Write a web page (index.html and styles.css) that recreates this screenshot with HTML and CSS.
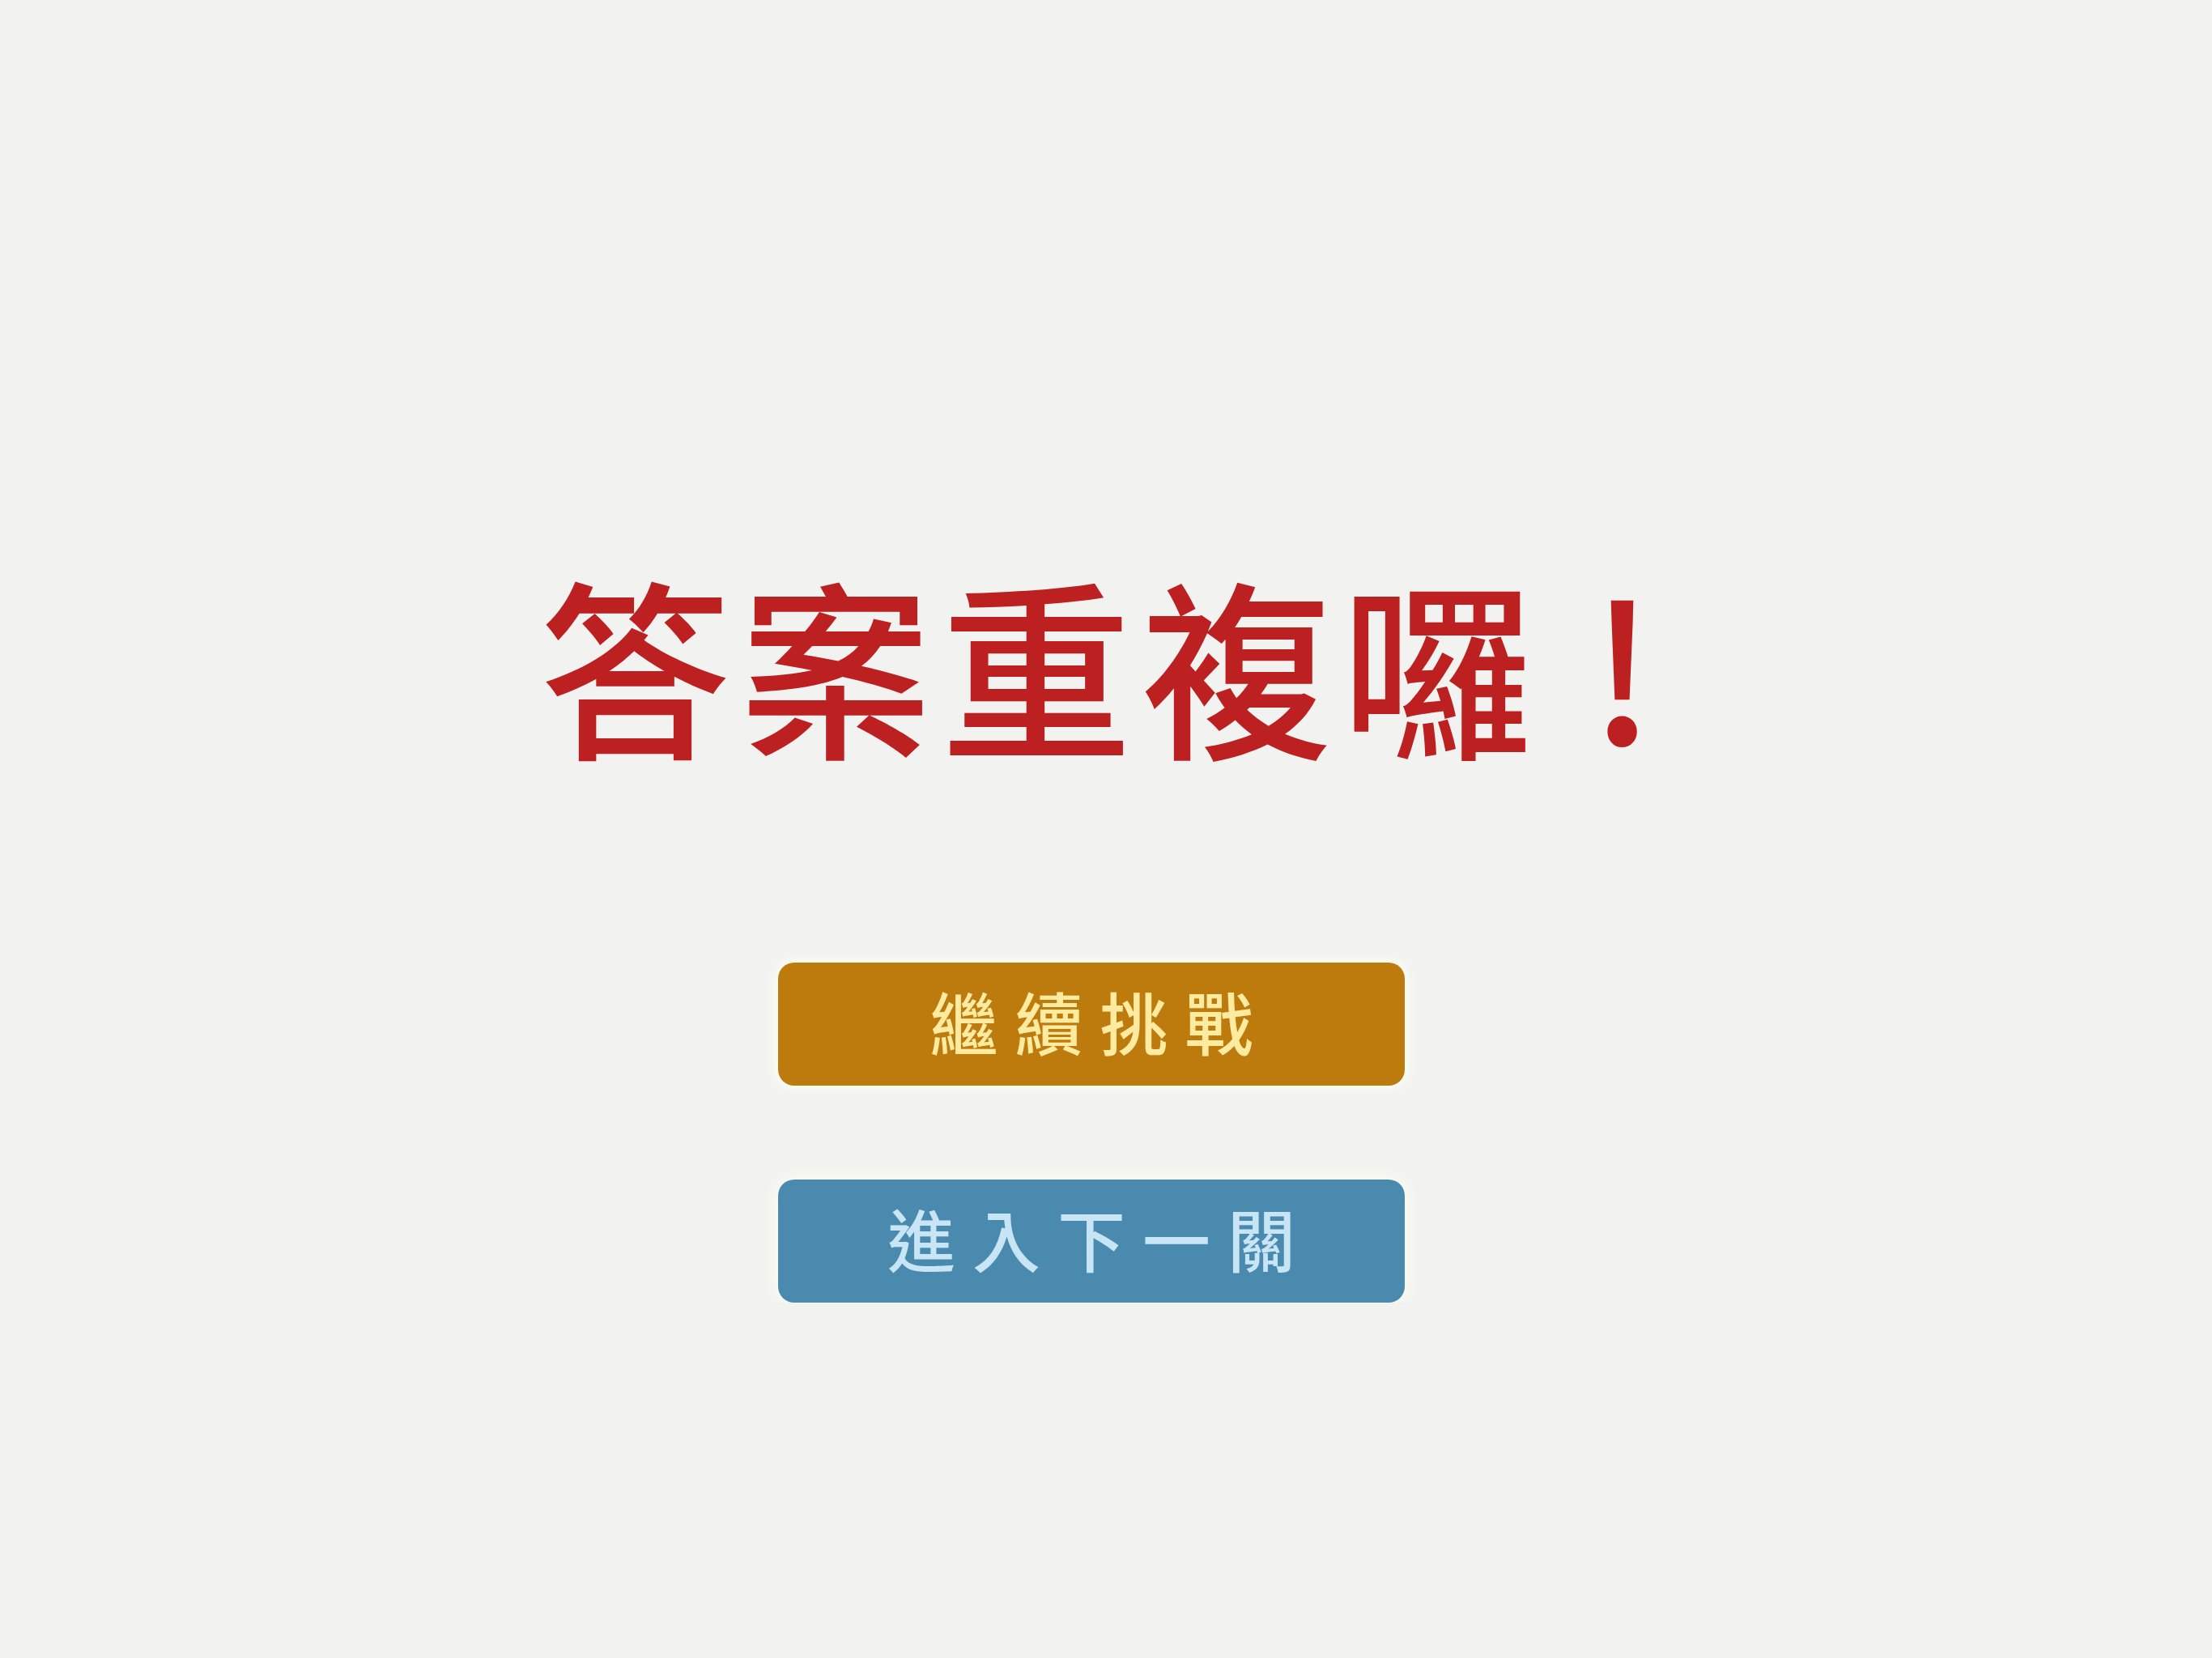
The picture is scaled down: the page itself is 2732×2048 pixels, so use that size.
FILE: index.html
```html
<!DOCTYPE html>
<html lang="zh-Hant">
<head>
<meta charset="utf-8">
<meta name="viewport" content="width=device-width, initial-scale=1">
<title>答案重複囉！</title>
<link rel="stylesheet" href="styles.css">
</head>
<body>
<main class="result">
  <h1 class="message">答案重複囉 <span class="mark">!</span></h1>
  <div class="actions">
    <button type="button" class="button button-retry">繼續挑戰</button>
    <button type="button" class="button button-next">進入下一關</button>
  </div>
</main>
</body>
</html>
```

FILE: styles.css
```css
body {
  margin: 0;
  background: #f2f2f0;
  font-family: "Noto Sans CJK TC", sans-serif;
}

.result {
  display: flex;
  flex-direction: column;
  align-items: center;
  gap: 252px;
  padding: 697px 36px 0 0;
}

.message {
  margin: 0;
  padding-left: 26px;
  color: #bd2020;
  font-size: 236px;
  font-weight: 500;
  line-height: 240px;
  letter-spacing: 12px;
  white-space: nowrap;
}

.mark {
  margin-left: -8px;
}

.actions {
  display: flex;
  flex-direction: column;
  gap: 116px;
  width: 774px;
  max-width: 100%;
}

.button {
  border: 0;
  border-radius: 20px;
  padding: 12px 0 20px 21px;
  font-family: inherit;
  font-size: 84px;
  font-weight: 500;
  line-height: 120px;
  letter-spacing: 21px;
  cursor: pointer;
}

.button-retry {
  background: #bd7a0d;
  color: #ffeba0;
  box-shadow: 0 0 16px 4px #fbfff3;
}

.button-next {
  background: #4a8aaf;
  color: #c8e5f5;
  box-shadow: 0 0 16px 4px #fcfdf2;
}
```
